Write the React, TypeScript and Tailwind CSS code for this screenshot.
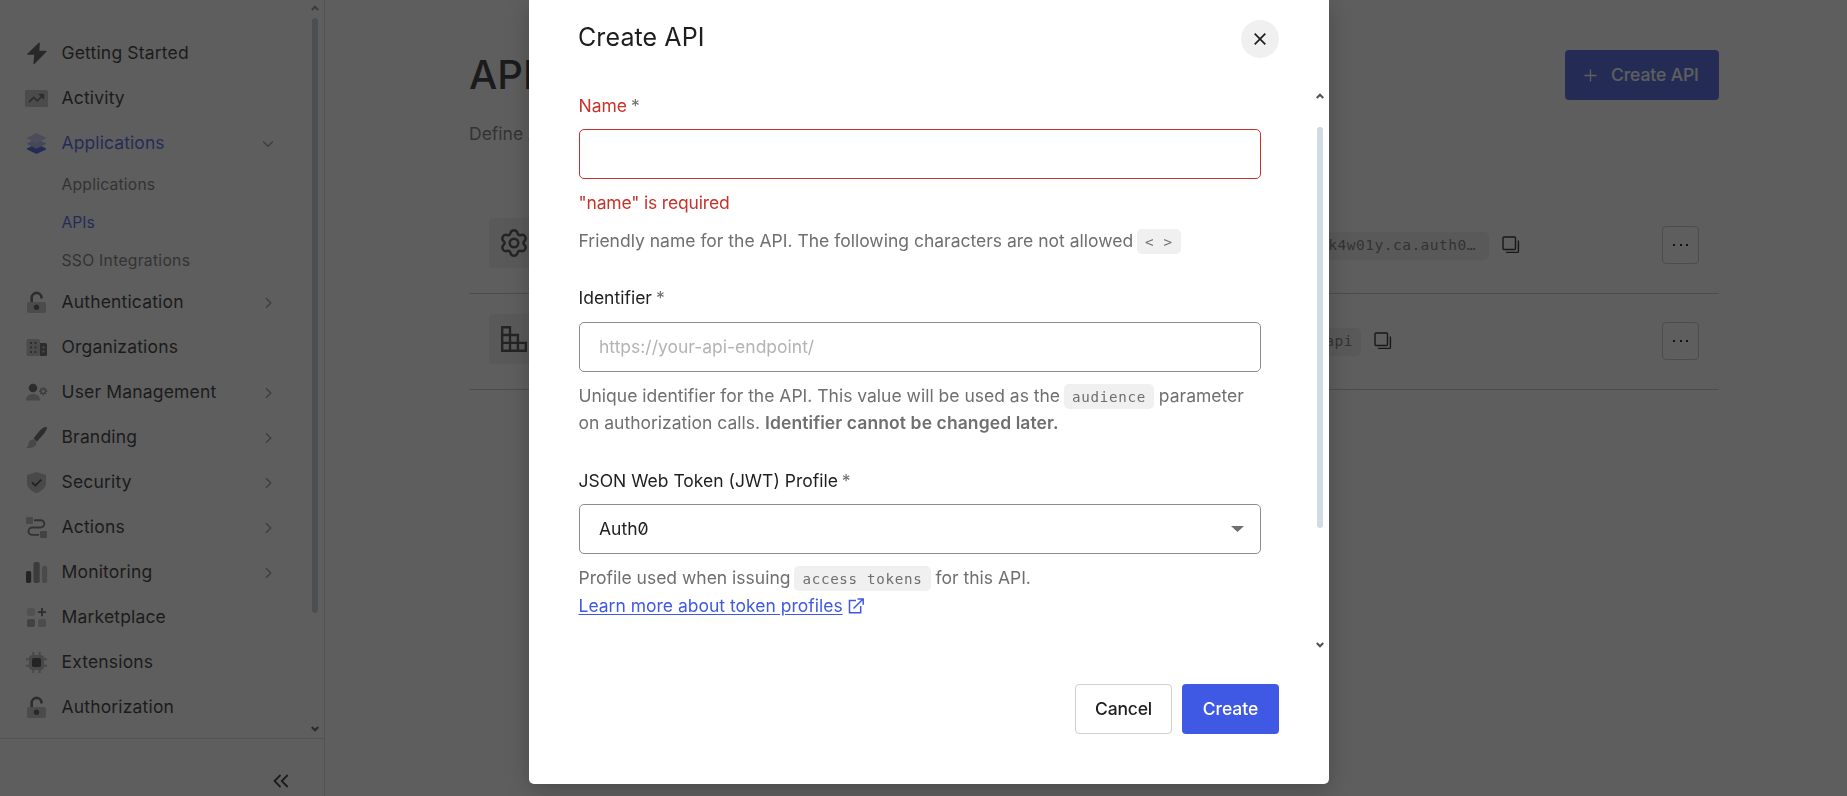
import React from "react";

type IconName =
  | "bolt" | "activity" | "layers" | "lock" | "org" | "user" | "brush" | "shield"
  | "actions" | "bars" | "market" | "chip";

const D = "#3c3c3c";
const M = "#8c8c8c";
const L = "#d4d4d4";

const icons: Record<IconName, React.ReactNode> = {
  bolt: <path d="M13.600 1.800 2.200 12.700h7.100l-.9 9.400L20.400 9.900h-7.200z" transform="translate(.6 -.6)" fill="#4d4d4d" stroke="#4d4d4d" strokeWidth="1.200" strokeLinejoin="round" />,
  activity: (
    <>
      <rect x="0" y="3" width="23" height="17" rx="1.600" fill="#c0c0c0" />
      <path d="M4 15.200 8.600 10.400l3.600 3.400 5.400-5.200" fill="none" stroke="#5c5c5c" strokeWidth="1.800" />
      <path d="M13.800 7.200h5v5z" fill="#5c5c5c" stroke="#5c5c5c" strokeWidth=".8" />
    </>
  ),
  layers: (
    <>
      <path d="m11.500 12 9.500 4.200v1.200l-9.500 4.600L2 17.400V16.200z" fill="#3f59e4" />
      <path d="m11.500 7 9.500 4.200v.9l-9.500 4.600L2 12.100v-.9z" fill="#a8b4ef" />
      <path d="m11.500 1 9.500 4.700v.8l-9.500 4.600L2 6.500v-.8z" fill="#c0c8ee" />
    </>
  ),
  lock: (
    <>
      <rect x="2" y="11" width="19" height="11" rx="2" fill="#c0c0c0" />
      <path d="M6.700 11V6.800a4.900 4.900 0 0 1 9.800 0v.7" fill="none" stroke="#5c5c5c" strokeWidth="2.600" />
      <circle cx="11.500" cy="16.300" r="2.700" fill="#4c4c4c" />
    </>
  ),
  org: (
    <>
      <rect x="1.500" y="3" width="13.500" height="17" rx="1.600" fill="#c0c0c0" />
      <path d="M15 7h5.500A1.500 1.500 0 0 1 22 8.500v10a1.500 1.500 0 0 1-1.500 1.500H15z" fill="#5c5c5c" />
      <path d="M5 6h2v2H5zM9.500 6h2v2h-2zM5 10.500h2v2H5zM9.500 10.500h2v2h-2zM5 15h2v2H5zM9.500 15h2v2h-2z" fill="#5c5c5c" />
      <path d="M17.500 10.500h1.800v1.800h-1.800zM17.500 14.700h1.800v1.800h-1.800z" fill="#d4d4d4" />
    </>
  ),
  user: (
    <>
      <circle cx="8" cy="7" r="4.300" fill="#5c5c5c" />
      <path d="M1 19.600c0-4.600 3-6.600 7-6.600s7 2 7 6.600z" fill="#b4b4b4" />
      <circle cx="18.200" cy="10.200" r="2.300" fill="none" stroke={M} strokeWidth="1.400" />
      <path d="M18.200 6v1.800M18.200 12.600v1.800M14 10.200h1.800M20.600 10.200h1.800M15.300 7.300l1.200 1.200M20 12l1.200 1.200M15.300 13.100l1.200-1.200M20 8.500l1.200-1.200" stroke={M} strokeWidth="1.200" />
    </>
  ),
  brush: (
    <>
      <path d="M22 1.200c-2.400-.5-5.600 1.400-8.200 4.600L8.600 12.200l3.400 3.200 6.300-7c2.200-2.600 3.700-5.200 3.700-7.200z" fill="#5c5c5c" />
      <path d="M8 13.200c1.700-.3 3.600 1.300 3.600 3.300 0 4.300-4.200 5.900-10.400 5.500 1.900-1.200 1.900-2.600 2.400-4.800.4-2.200 2.200-3.800 4.400-4z" fill="#b4b4b4" />
    </>
  ),
  shield: (
    <>
      <path d="M11.500 1 21 4v8.200c0 4.800-4.600 8-9.500 10-4.900-2-9.500-5.200-9.500-10V4z" fill="#b8b8b8" />
      <path d="m7 11.400 3.300 3.200 6-6" fill="none" stroke={D} strokeWidth="1.900" />
    </>
  ),
  actions: (
    <>
      <rect x="1" y="1" width="7" height="7" rx="1" fill="#b4b4b4" />
      <rect x="15" y="15" width="7" height="7" rx="1" fill="#a4a4a4" />
      <path d="M9 4.200h6.700a3.600 3.600 0 0 1 0 7.300H7.200a3.600 3.600 0 0 0 0 7.400H14" fill="none" stroke="#6b6b6b" strokeWidth="1.900" />
    </>
  ),
  bars: (
    <>
      <rect x="1" y="10" width="5.200" height="12" rx="1.800" fill={D} />
      <rect x="8.500" y="1" width="6.200" height="21" rx="1.800" fill={M} />
      <rect x="17" y="5" width="5.200" height="17" rx="1.800" fill="#bcbcbc" />
    </>
  ),
  market: (
    <>
      <rect x="2" y="2" width="8" height="8" rx="1.800" fill={L} />
      <rect x="2" y="13" width="8" height="8" rx="1.800" fill="#a0a0a0" />
      <rect x="13" y="13" width="8" height="8" rx="1.800" fill="#c4c4c4" />
      <path d="M17 2v8.200M12.900 6.100H21" stroke="#5c5c5c" strokeWidth="1.800" />
    </>
  ),
  chip: (
    <>
      <rect x="4" y="4" width="15" height="15" rx="3.500" fill="#b4b4b4" />
      <path d="M8.300 1v3M14.700 1v3M8.300 19v3M14.700 19v3M1 8.300h3M1 14.700h3M19 8.300h3M19 14.700h3" stroke="#b4b4b4" strokeWidth="2" />
      <rect x="7" y="7" width="9" height="9" rx="1.800" fill={D} />
    </>
  ),
};

const Icon = ({ name }: { name: IconName }) => (
  <svg width="23" height="23" viewBox="0 0 23 23" className="shrink-0">{icons[name]}</svg>
);

const Caret = ({ down }: { down?: boolean }) => (
  <svg width="12" height="12" viewBox="0 0 12 12" fill="none" stroke="#8f8f8f" strokeWidth="1.300">
    <path d={down ? "M1.200 3.500 6 8.300l4.800-4.800" : "M4 1.200 8.800 6 4 10.800"} />
  </svg>
);

const ScrollArrow = ({ up, color = "#505050" }: { up?: boolean; color?: string }) => (
  <svg width="8" height="6" viewBox="0 0 8 6" fill="none" stroke={color} strokeWidth="2">
    <path d={up ? "M.8 5 4 1.700 7.200 5" : "M.8 1 4 4.300 7.200 1"} />
  </svg>
);

interface NavItem {
  icon: IconName;
  label: string;
  arrow?: boolean;
}

const top: NavItem[] = [
  { icon: "bolt", label: "Getting Started" },
  { icon: "activity", label: "Activity" },
];
const rest: NavItem[] = [
  { icon: "lock", label: "Authentication", arrow: true },
  { icon: "org", label: "Organizations" },
  { icon: "user", label: "User Management", arrow: true },
  { icon: "brush", label: "Branding", arrow: true },
  { icon: "shield", label: "Security", arrow: true },
  { icon: "actions", label: "Actions", arrow: true },
  { icon: "bars", label: "Monitoring", arrow: true },
  { icon: "market", label: "Marketplace" },
  { icon: "chip", label: "Extensions" },
  { icon: "lock", label: "Authorization" },
];

const NavRow = ({ item }: { item: NavItem }) => (
  <div className="flex h-[45px] items-center pl-[25px] pr-[35px]">
    <Icon name={item.icon} />
    <span className="ml-[13.500px] flex-1 tracking-[0.17px]">{item.label}</span>
    {item.arrow && <Caret />}
  </div>
);

const Sidebar = () => (
  <aside className="flex h-full w-[325px] shrink-0 flex-col border-r border-[#d9d9d9]">
    <div className="flex h-[739px] border-b border-[#d9d9d9]">
      <nav className="w-[309px] pt-[30px]">
        <div className="pt-px">
          {top.map((i) => <NavRow key={i.label} item={i} />)}
        </div>
        <div className="flex h-[45px] items-center pl-[25px] pr-[35px] text-[#3f59e4]">
          <Icon name="layers" />
          <span className="ml-[13.500px] flex-1 tracking-[0.1px]">Applications</span>
          <Caret down />
        </div>
        <div className="flex flex-col pl-[61.500px] text-[15.700px] tracking-[0.2px] text-[#6f6f6f]">
          <span className="flex h-[38px] items-center">Applications</span>
          <span className="flex h-[38px] items-center tracking-normal text-[#3f59e4]">APIs</span>
          <span className="flex h-[38px] items-center tracking-[0.27px]">SSO Integrations</span>
        </div>
        {rest.map((i) => <NavRow key={i.label} item={i} />)}
      </nav>
      <div className="flex w-[12px] flex-col items-center pt-[5px]">
        <ScrollArrow up color="#8b8b8b" />
        <div className="mt-[7px] h-[595px] w-[6px] rounded-full bg-[#c0ccd6]" />
        <div className="mt-[113px]"><ScrollArrow /></div>
      </div>
    </div>
    <div className="flex justify-end pr-[35px] pt-[35px]">
      <svg width="16" height="14" viewBox="0 0 16 14" fill="none" stroke="#1e1e1e" strokeWidth="1.800">
        <path d="M7.500 1 1.500 7l6 6M14.700 1l-6 6 6 6" />
      </svg>
    </div>
  </aside>
);

const Copy = () => (
  <svg width="18" height="18" viewBox="0 0 18 18" fill="none" stroke="#111" strokeWidth="1.400">
    <rect x="1" y="1" width="12.500" height="12.500" rx="1" />
    <path d="M16.400 4.500v10.900a1 1 0 0 1-1 1H4" />
  </svg>
);

const ApiRow = ({ icon, id, width, pad }: { icon: React.ReactNode; id: string; width: string; pad: string }) => (
  <div className="flex h-[96px] items-center border-b border-[#c4c4c4] pl-[20px] pr-[20px]">
    <div className={`flex items-center justify-between ${width}`}>
      <div className="mb-[5px] flex size-[50px] items-center justify-center rounded-[4px] bg-[#efefef]">{icon}</div>
      <code className={`flex h-[28px] items-center rounded-[5px] bg-[#efefef] pl-2 font-['DejaVu_Sans_Mono',monospace] text-[14.500px] tracking-[0.5px] text-[#6f6f6f] ${pad}`}>{id}</code>
    </div>
    <div className="mb-px ml-[13px]"><Copy /></div>
    <div className="mb-[2px] ml-auto flex h-[38px] w-[37px] items-center justify-center gap-[4.500px] rounded-[4px] border border-[#c4c4c4]">
      <i className="size-[2px] bg-black" /><i className="size-[2px] bg-black" /><i className="size-[2px] bg-black" />
    </div>
  </div>
);

const Page = () => (
  <main className="flex-1 pl-[144px] pr-[128px] pt-[50px]">
    <header className="flex items-start justify-between">
      <div>
        <h1 className="text-[40px] font-medium leading-[50px]">APIs</h1>
        <p className="mt-[20px] leading-[27px] text-[#6f6f6f]">Define APIs that you can consume from your authorized applications.</p>
      </div>
      <button className="flex h-[50px] w-[154px] items-center rounded-[4px] bg-[#3f59e4] pl-[19px] font-medium text-white">
        <svg width="13" height="13" viewBox="0 0 13 13" stroke="white" strokeWidth="1.300"><path d="M6.500.5v12M.5 6.500h12" /></svg>
        <span className="ml-[14px] tracking-[-0.1px]">Create API</span>
      </button>
    </header>
    <section className="mt-[51px]">
      <ApiRow
        width="w-[1000px]"
        pad="pr-[13px]"
        id="https://dev-8x2k4w01y.ca.auth0…"
        icon={
          <svg width="30" height="30" viewBox="1.400 -.3 25.200 25.200" fill="none" stroke="#3f3f3f" strokeWidth="2.100" strokeLinejoin="round">
            <path d="M11.200 3.500c1-2.600 4.600-2.600 5.600 0l.5 1.200c.3.700 1 1.100 1.700 1l1.300-.2c2.700-.4 4.500 2.700 2.800 4.800l-.8 1c-.5.6-.5 1.400 0 2l.8 1c1.700 2.100-.1 5.200-2.800 4.800l-1.300-.2c-.7-.1-1.400.3-1.700 1l-.5 1.200c-1 2.600-4.600 2.600-5.600 0l-.5-1.200c-.3-.7-1-1.100-1.700-1l-1.300.2c-2.700.4-4.500-2.700-2.800-4.800l.8-1c.5-.6.5-1.400 0-2l-.8-1c-1.700-2.100.1-5.200 2.800-4.800l1.300.2c.7.1 1.400-.3 1.700-1z" />
            <circle cx="14" cy="12.300" r="3.600" />
          </svg>
        }
      />
      <ApiRow
        width="w-[872px]"
        pad="pr-[8px]"
        id="https://my-api"
        icon={
          <svg width="26" height="26" viewBox="0 0 26 26" fill="none" stroke="#3f3f3f" strokeWidth="2.400">
            <path d="M1.200 1.200H9v23.600H1.200zM9 9h7.900v15.800M1.200 9H9M1.200 16.900h23.600v7.900H1.200" />
          </svg>
        }
      />
    </section>
  </main>
);

const Label = ({ children, error }: { children: string; error?: boolean }) => (
  <label className={`block leading-[27px] ${error ? "text-[#c8322b]" : "text-[#1e1e1e]"}`}>
    {children}<span className="ml-[4px] text-[#6f6f6f]">*</span>
  </label>
);

const Code = ({ children }: { children: string }) => (
  <code className="-my-[4px] -ml-px inline-block whitespace-pre rounded-[5px] bg-[#f0f0f0] px-2 pb-[3px] pt-[5px] font-['DejaVu_Sans_Mono',monospace] text-[14.200px] leading-[17px] tracking-[0.7px]">{children}</code>
);

const Modal = () => (
  <div className="fixed inset-0 flex justify-center bg-[#191919]/70 pl-[11px]">
    <div role="dialog" className="flex h-[784px] w-[800px] flex-col rounded-b-[5px] bg-white shadow-[0_5px_25px_rgba(0,0,0,0.22)]">
      <div className="flex h-[88px] items-start justify-between pl-[49px] pr-[50px] pt-[20px]">
        <h2 className="text-[25px] leading-[35px] tracking-[0.1px] text-[#1e1e1e]">Create API</h2>
        <button className="flex size-[38px] items-center justify-center rounded-full bg-[#f0f0f0]">
          <svg width="12" height="12" viewBox="0 0 12 12" stroke="#1e1e1e" strokeWidth="1.700"><path d="m.7.7 10.600 10.600M11.300.7.7 11.300" /></svg>
        </button>
      </div>
      <div className="flex h-[564px] justify-between pr-[5px]">
        <form className="ml-[50px] w-[682px] pt-[4px] text-[#6f6f6f]">
          <div className="-ml-[0.5px]"><Label error>Name</Label></div>
          <div className="mt-[10px] h-[50px] rounded-[5px] border border-[#c8322b]" />
          <p className="-ml-[0.5px] mt-[10px] leading-[27px] tracking-[-0.17px] text-[#c8322b]">"name" is required</p>
          <p className="-ml-[0.5px] mt-[11px] leading-[27px]">Friendly name for the API. The following characters are not allowed <Code>{"< >"}</Code></p>
          <div className="h-[30px]" />
          <div className="-ml-[0.5px]"><Label>Identifier</Label></div>
          <div className="mt-[11px] flex h-[50px] items-center rounded-[5px] border border-[#8c8c8c] px-[19px] text-[#b3b3b3]">https://your-api-endpoint/</div>
          <p className="-ml-[0.5px] mt-[10px] leading-[27px]">
            Unique identifier for the API. This value will be used as the <Code>audience</Code> parameter<br />
            on authorization calls. <strong className="font-semibold tracking-[0.1px]">Identifier cannot be changed later.</strong>
          </p>
          <div className="h-[31px]" />
          <div className="-ml-[0.5px]"><Label>JSON Web Token (JWT) Profile</Label></div>
          <div className="mt-[10px] flex h-[50px] items-center justify-between rounded-[5px] border border-[#8c8c8c] pl-[19px] pr-[16px] text-[#1e1e1e]">
            <span className="slashed-zero">Auth0</span>
            <svg width="13" height="6" viewBox="0 0 13 6"><path d="M0 0h13L6.500 6z" fill="#6f6f6f" /></svg>
          </div>
          <p className="-ml-[0.5px] mt-[10px] leading-[27px]">Profile used when issuing <Code>access tokens</Code> for this API.</p>
          <p className="-ml-[0.5px] mt-px flex items-center leading-[27px] text-[#3f59e4]">
            <a className="underline underline-offset-2">Learn more about token profiles</a>
            <svg className="ml-[5px]" width="16" height="16" viewBox="0 0 16 16" fill="none" stroke="#3f59e4" strokeWidth="1.500">
              <path d="M8 2.500H1.500v12.200h11.200V8M9.500 1h5.700v5.700M15 1 5.500 10.500" />
            </svg>
          </p>
        </form>
        <div className="flex w-[8px] flex-col items-center pt-[5px]">
          <ScrollArrow up />
          <div className="mt-[28px] h-[401px] w-[6px] rounded-full bg-[#cfdbe5]" />
          <div className="mt-[114px]"><ScrollArrow /></div>
        </div>
      </div>
      <div className="flex justify-end gap-[10px] pr-[50px] pt-[32px]">
        <button className="h-[50px] w-[97px] rounded-[4px] border border-[#d0d0d0] font-medium tracking-[-0.2px] text-[#1e1e1e]">Cancel</button>
        <button className="h-[50px] w-[97px] rounded-[4px] bg-[#3f59e4] font-medium text-white">Create</button>
      </div>
    </div>
  </div>
);

export default function App() {
  return (
    <div className="flex h-[796px] overflow-hidden bg-white font-['Inter',sans-serif] text-[17.500px] text-[#1e1e1e]">
      <Sidebar />
      <Page />
      <Modal />
    </div>
  );
}
